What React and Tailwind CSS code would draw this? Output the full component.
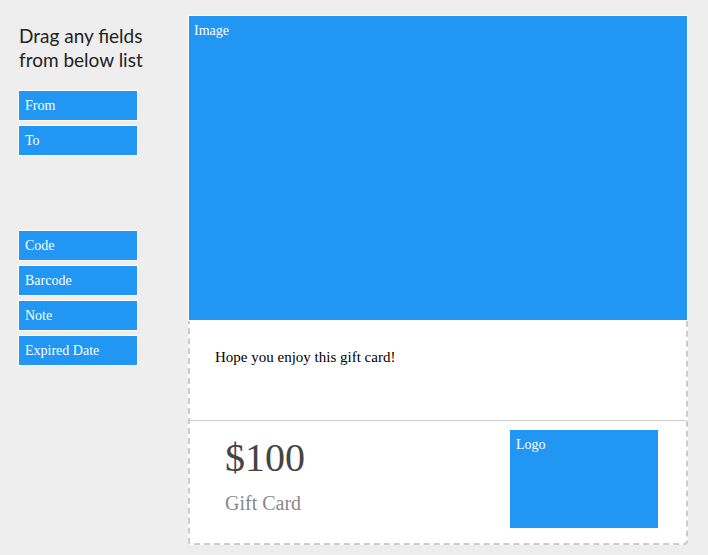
import React from 'react';

const serif = { fontFamily: '"Liberation Serif", "Times New Roman", serif' };

function FieldItem({ label }) {
  return (
    <div className="w-[120px] h-[31px] border border-white bg-[#2196f3] text-white text-[14px] leading-[29px] pl-[6px] mb-[4px]" style={serif}>
      {label}
    </div>
  );
}

export default function App() {
  return (
    <div className="w-[708px] h-[555px] bg-[#eeeeee] flex">
      <aside className="w-[188px] pl-[19px] pt-[24px]">
        <h2 className="text-[19px] leading-[24px] text-[#222]" style={{ fontFamily: 'Lato, "Open Sans", sans-serif' }}>
          Drag any fields<br />from below list
        </h2>
        <div className="mt-[18px] -ml-[1px]">
          <FieldItem label="From" />
          <FieldItem label="To" />
          <div className="h-[70px]" />
          <FieldItem label="Code" />
          <FieldItem label="Barcode" />
          <FieldItem label="Note" />
          <FieldItem label="Expired Date" />
        </div>
      </aside>

      <main className="pt-[15px]">
        <div className="w-[500px] h-[530px] bg-white border-2 border-dashed border-[#cccccc] rounded-[4px] flex flex-col" style={serif}>
          <div className="-mx-[2px] -mt-[2px] h-[306px] bg-[#2196f3] border border-white text-white text-[14px] pl-[5px] pt-[6px] leading-[18px]">
            Image
          </div>
          <div className="h-[99px] pl-[25px] pt-[27px] text-[15px] leading-[18px] text-black">
            Hope you enjoy this gift card!
          </div>
          <div className="flex-1 border-t border-[#cccccc] flex justify-between">
            <div className="pl-[35px] pt-[14px]">
              <div className="text-[40px] leading-[46px] text-[#444]">$100</div>
              <div className="text-[20px] leading-[24px] text-[#888] mt-[10px]">Gift Card</div>
            </div>
            <div className="mt-[9px] mr-[28px] w-[148px] h-[98px] bg-[#2196f3] text-white text-[14px] leading-[18px] pl-[6px] pt-[6px]">
              Logo
            </div>
          </div>
        </div>
      </main>
    </div>
  );
}
